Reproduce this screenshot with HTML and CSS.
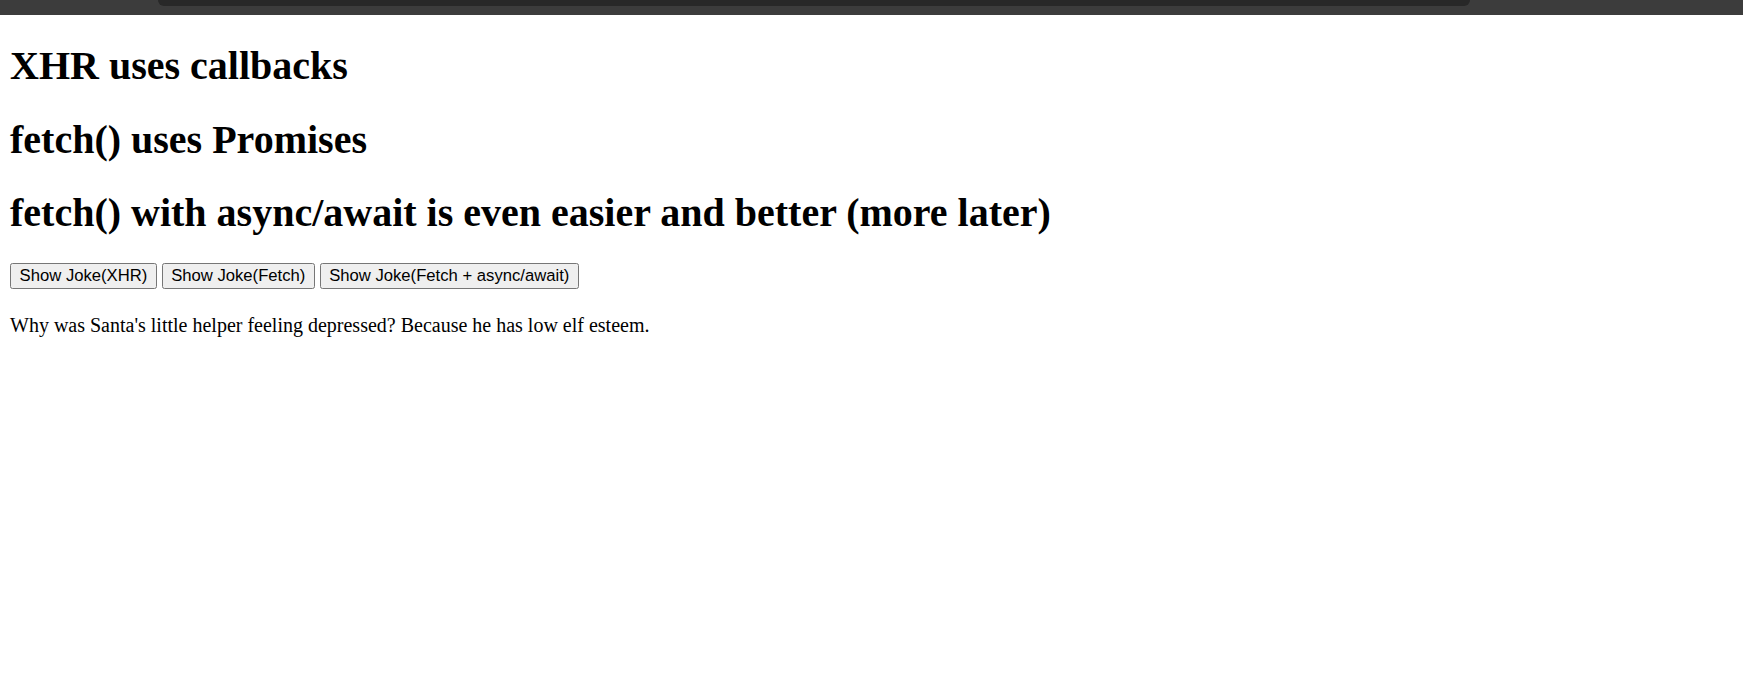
FILE: index.html
```html
<!DOCTYPE html>
<html>
<head>
<meta charset="utf-8">
<link rel="stylesheet" href="styles.css">
</head>
<body>
<div class="chrome"><div class="tab"></div></div>
<main class="page">
  <h1 class="title">XHR uses callbacks</h1>
  <h1 class="title">fetch() uses Promises</h1>
  <h1 class="title">fetch() with async/await is even easier and better (more later)</h1>
  <div class="buttons">
    <button class="btn">Show Joke(XHR)</button>
    <button class="btn">Show Joke(Fetch)</button>
    <button class="btn">Show Joke(Fetch + async/await)</button>
  </div>
  <p class="joke">Why was Santa's little helper feeling depressed? Because he has low elf esteem.</p>
</main>
</body>
</html>
```
FILE: styles.css
```css
html, body {
  margin: 0;
  padding: 0;
  background: #ffffff;
}
body {
  font-family: "Liberation Serif", "Times New Roman", serif;
  color: #000;
}
.chrome {
  height: 15px;
  background: #3c3c3c;
  display: flex;
  padding-left: 158px;
  padding-right: 273px;
}
.tab {
  flex: 1;
  height: 6px;
  background: #282828;
  border-radius: 0 0 10px 10px;
}
.page {
  padding: 0 10px;
  overflow: hidden;
}
.title {
  font-size: 40px;
  font-weight: bold;
  margin: 26.8px 0;
  line-height: normal;
}
.buttons {
  display: flex;
  gap: 4.6px;
  margin-top: 0;
}
.btn {
  font-family: "Liberation Sans", Arial, sans-serif;
  font-size: 16.67px;
  line-height: normal;
  color: #000;
  background: #efefef;
  border: 1px solid #767676;
  border-radius: 2.5px;
  padding: 1.25px 8.6px;
  height: 26px;
  margin: 0;
}
.joke {
  font-size: 20px;
  margin: 25px 0 20px;
}
```
